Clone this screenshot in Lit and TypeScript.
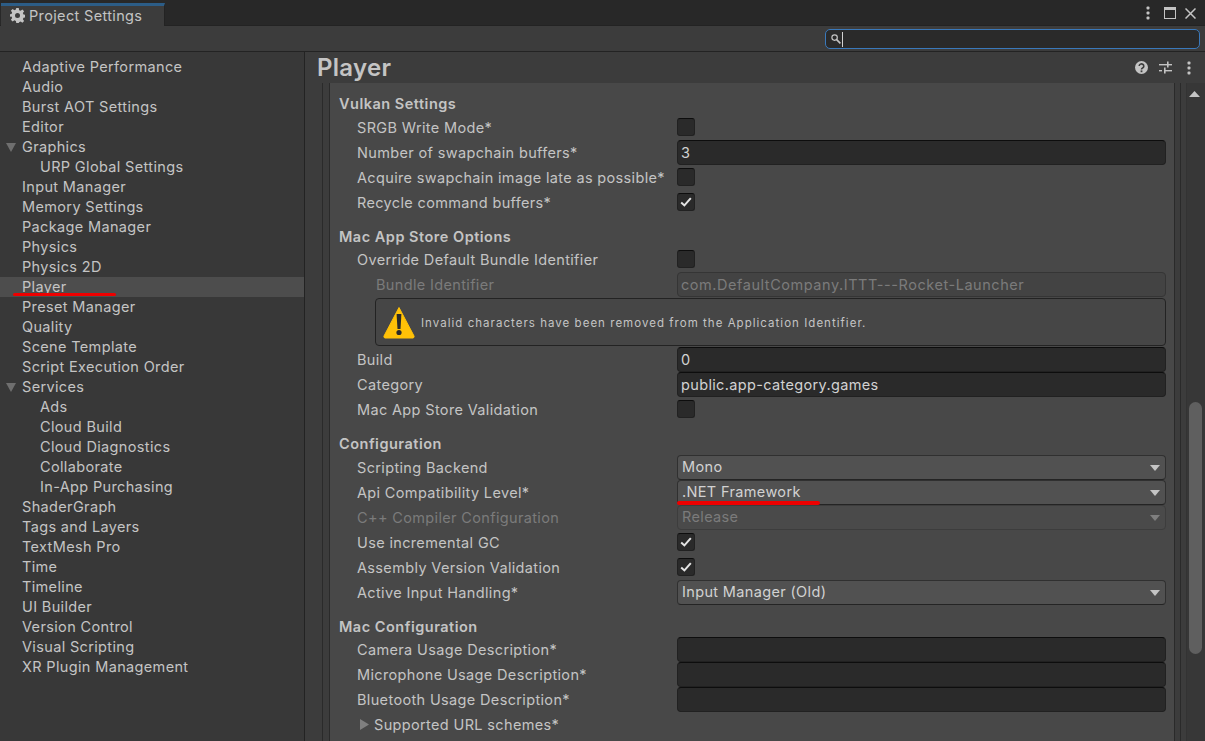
import { LitElement, css, html, nothing } from "lit";
import { customElement } from "lit/decorators.js";

type Row =
  | { kind: "head"; text: string; tall?: boolean }
  | { kind: "check"; label: string; checked?: boolean; dim?: boolean }
  | { kind: "text"; label: string; value?: string; sub?: boolean; dim?: boolean }
  | { kind: "drop"; label: string; value: string; dim?: boolean; mark?: boolean }
  | { kind: "help"; text: string }
  | { kind: "fold"; label: string };

const NAV: { t: string; lvl?: number; open?: boolean; sel?: boolean }[] = [
  { t: "Adaptive Performance" },
  { t: "Audio" },
  { t: "Burst AOT Settings" },
  { t: "Editor" },
  { t: "Graphics", open: true },
  { t: "URP Global Settings", lvl: 1 },
  { t: "Input Manager" },
  { t: "Memory Settings" },
  { t: "Package Manager" },
  { t: "Physics" },
  { t: "Physics 2D" },
  { t: "Player", sel: true },
  { t: "Preset Manager" },
  { t: "Quality" },
  { t: "Scene Template" },
  { t: "Script Execution Order" },
  { t: "Services", open: true },
  { t: "Ads", lvl: 1 },
  { t: "Cloud Build", lvl: 1 },
  { t: "Cloud Diagnostics", lvl: 1 },
  { t: "Collaborate", lvl: 1 },
  { t: "In-App Purchasing", lvl: 1 },
  { t: "ShaderGraph" },
  { t: "Tags and Layers" },
  { t: "TextMesh Pro" },
  { t: "Time" },
  { t: "Timeline" },
  { t: "UI Builder" },
  { t: "Version Control" },
  { t: "Visual Scripting" },
  { t: "XR Plugin Management" },
];

const ROWS: Row[] = [
  { kind: "head", text: "Vulkan Settings", tall: true },
  { kind: "check", label: "SRGB Write Mode*" },
  { kind: "text", label: "Number of swapchain buffers*", value: "3" },
  { kind: "check", label: "Acquire swapchain image late as possible*" },
  { kind: "check", label: "Recycle command buffers*", checked: true },
  { kind: "head", text: "Mac App Store Options" },
  { kind: "check", label: "Override Default Bundle Identifier" },
  { kind: "text", label: "Bundle Identifier", value: "com.DefaultCompany.ITTT---Rocket-Launcher", sub: true, dim: true },
  { kind: "help", text: "Invalid characters have been removed from the Application Identifier." },
  { kind: "text", label: "Build", value: "0" },
  { kind: "text", label: "Category", value: "public.app-category.games" },
  { kind: "check", label: "Mac App Store Validation" },
  { kind: "head", text: "Configuration", tall: true },
  { kind: "drop", label: "Scripting Backend", value: "Mono" },
  { kind: "drop", label: "Api Compatibility Level*", value: ".NET Framework", mark: true },
  { kind: "drop", label: "C++ Compiler Configuration", value: "Release", dim: true },
  { kind: "check", label: "Use incremental GC", checked: true },
  { kind: "check", label: "Assembly Version Validation", checked: true },
  { kind: "drop", label: "Active Input Handling*", value: "Input Manager (Old)" },
  { kind: "head", text: "Mac Configuration" },
  { kind: "text", label: "Camera Usage Description*" },
  { kind: "text", label: "Microphone Usage Description*" },
  { kind: "text", label: "Bluetooth Usage Description*" },
  { kind: "fold", label: "Supported URL schemes*" },
];

const kebab = html`<svg width="4" height="14" viewBox="0 0 4 14"><g fill="#c4c4c4"><rect x="0.5" y="0.5" width="3" height="3" rx="1"/><rect x="0.5" y="5.5" width="3" height="3" rx="1"/><rect x="0.5" y="10.5" width="3" height="3" rx="1"/></g></svg>`;

@customElement("app-root")
export class AppRoot extends LitElement {
  static styles = css`
    :host {
      display: flex;
      flex-direction: column;
      width: 1205px;
      height: 741px;
      overflow: hidden;
      background: #3c3c3c;
      color: #c4c4c4;
      font-family: Inter, "Liberation Sans", sans-serif;
      font-size: 14.5px;
      letter-spacing: 0.35px;
    }
    .tabbar {
      flex: 0 0 26px;
      box-sizing: border-box;
      background: #282828;
      border-bottom: 1px solid #232323;
      padding: 3px 0 0 1px;
      display: flex;
      align-items: stretch;
    }
    .tab {
      width: 164px;
      box-sizing: border-box;
      margin-bottom: -1px;
      background: #3c3c3c;
      border-top: 3px solid #2c5d87;
      border-right: 1px solid #232323;
      display: flex;
      align-items: center;
      gap: 4px;
      padding: 0 0 1px 9px;
    }
    .winbtns {
      margin-left: auto;
      display: flex;
      align-items: center;
      gap: 9px;
      padding: 0 9px 2px 0;
    }
    .winbtns svg:first-child {
      margin-right: 5px;
    }
    .toolbar {
      flex: 0 0 26px;
      box-sizing: border-box;
      border-bottom: 1px solid #232323;
      display: flex;
      justify-content: flex-end;
      padding: 3px 5px 0 0;
    }
    .search {
      width: 375px;
      height: 20px;
      box-sizing: border-box;
      background: #2a2a2a;
      border: 1px solid #3a79bb;
      border-radius: 5px;
      display: flex;
      align-items: center;
      padding-left: 5px;
      gap: 1px;
    }
    .caret {
      width: 1px;
      height: 15px;
      background: #d2d2d2;
    }
    .split {
      flex: 1;
      min-height: 0;
      display: flex;
    }
    .side {
      flex: 0 0 305px;
      box-sizing: border-box;
      background: #383838;
      border-right: 1px solid #232323;
      padding-top: 5px;
    }
    .nav {
      position: relative;
      height: 20px;
      line-height: 20px;
      padding-left: 22px;
      white-space: nowrap;
    }
    .nav.l1 {
      padding-left: 40px;
    }
    .nav.sel {
      background: #4d4d4d;
    }
    .tri {
      position: absolute;
      left: 6px;
      top: 6px;
    }
    .redline {
      position: absolute;
      background: #ee0000;
      border-radius: 2px;
    }
    .nav .redline {
      left: 13px;
      top: 16px;
      width: 103px;
      height: 3px;
    }
    .main {
      flex: 1;
      min-width: 0;
      display: flex;
      flex-direction: column;
    }
    .head {
      flex: 0 0 31px;
      display: flex;
      align-items: center;
      padding: 0 14px 0 12px;
    }
    .title {
      font-size: 24px;
      font-weight: 600;
      letter-spacing: 0.3px;
      flex: 1;
      line-height: 31px;
    }
    .headicons {
      display: flex;
      align-items: center;
      gap: 11px;
    }
    .headicons svg:last-child {
      margin-left: 4px;
    }
    .body {
      flex: 1;
      min-height: 0;
      display: flex;
    }
    .gutter {
      flex: 0 0 18px;
      box-sizing: border-box;
      border-right: 1px solid #2a2a2a;
    }
    .gutter2 {
      flex: 0 0 7px;
      box-sizing: border-box;
      border-right: 1px solid #2a2a2a;
    }
    .content {
      flex: 1;
      min-width: 0;
      box-sizing: border-box;
      background: #484848;
      border-right: 1px solid #2a2a2a;
      padding: 10px 8px 0 9px;
      overflow: hidden;
    }
    .strip {
      flex: 0 0 6px;
      box-sizing: border-box;
      border-right: 1px solid #2a2a2a;
    }
    .strip2 {
      flex: 0 0 6px;
      box-sizing: border-box;
      border-right: 1px solid #333;
    }
    .track {
      flex: 0 0 18px;
      background: #373737;
      padding: 8px 0 0 2px;
      box-sizing: border-box;
    }
    .thumb {
      width: 13px;
      height: 252px;
      margin-top: 305px;
      border-radius: 7px;
      background: #5f5f5f;
    }
    .up {
      display: block;
    }
    h3 {
      margin: 11px 0 0;
      height: 21px;
      line-height: 22px;
      font-size: 14.5px;
      font-weight: 600;
      letter-spacing: 0.5px;
    }
    h3:first-child {
      margin-top: 0;
    }
    h3.tall {
      height: 22px;
    }
    .row {
      height: 25px;
      display: flex;
      align-items: center;
      padding-left: 18px;
    }
    .row.sub {
      padding-left: 37px;
    }
    .lab {
      flex: 1;
      white-space: nowrap;
    }
    .dim {
      color: #7b7b7b;
    }
    .ctl {
      flex: 0 0 489px;
      box-sizing: border-box;
      position: relative;
    }
    .field {
      height: 23px;
      line-height: 23px;
      padding-left: 3px;
      background: #2a2a2a;
      border: 1px solid #212121;
      border-top-color: #0d0d0d;
      border-radius: 4px;
      color: #d2d2d2;
    }
    .field.ro {
      background: #434343;
      border-color: #353535;
      color: #7b7b7b;
      letter-spacing: 0.55px;
    }
    .drop {
      height: 23px;
      line-height: 21px;
      padding-left: 4px;
      background: #515151;
      border: 1px solid #303030;
      border-bottom-color: #242424;
      border-radius: 4px;
      color: #d2d2d2;
      display: flex;
      align-items: center;
      justify-content: space-between;
      padding-right: 5px;
    }
    .drop span {
      margin-top: -2px;
    }
    .drop.off {
      background: #4a4a4a;
      border-color: #3d3d3d;
      color: #7b7b7b;
    }
    .ctl .redline {
      left: 0;
      top: 21px;
      width: 143px;
      height: 4px;
    }
    .box {
      width: 18px;
      height: 18px;
      margin-top: -1px;
      box-sizing: border-box;
      background: #2a2a2a;
      border: 1px solid #212121;
      border-top-color: #0d0d0d;
      border-radius: 3px;
      display: flex;
      align-items: center;
      justify-content: center;
    }
    .help {
      height: 48px;
      box-sizing: border-box;
      margin: 1px 0 1px 36px;
      border: 1px solid #232323;
      border-radius: 4px;
      background: #464646;
      display: flex;
      align-items: center;
      gap: 6px;
      padding-left: 7px;
      font-size: 11.5px;
      letter-spacing: 1.03px;
    }
    .help span {
      margin-top: 1px;
    }
    .fold {
      gap: 5px;
      padding-left: 21px;
    }
  `;

  private renderRow(r: Row) {
    if (r.kind === "head") return html`<h3 class=${r.tall ? "tall" : ""}>${r.text}</h3>`;
    if (r.kind === "help")
      return html`<div class="help">
        <svg width="32" height="33" viewBox="0 0 32 33">
          <path d="M16 1.5L31 30a1.5 1.5 0 0 1-1 2H2a1.5 1.5 0 0 1-1-2z" fill="#ffc107" stroke="#ffc107" stroke-linejoin="round"/>
          <path d="M13.6 8h4.8l-.9 15h-3z" fill="#2a2a2a"/>
          <circle cx="16" cy="26.5" r="2.6" fill="#2a2a2a"/>
        </svg>
        <span>${r.text}</span>
      </div>`;
    if (r.kind === "fold")
      return html`<div class="row fold">
        <svg width="9" height="11" viewBox="0 0 9 11"><path d="M0 0l9 5.5L0 11z" fill="#7f7f7f"/></svg>
        <span class="lab">${r.label}</span>
      </div>`;
    const lab = html`<span class="lab ${r.dim ? "dim" : ""}">${r.label}</span>`;
    if (r.kind === "check")
      return html`<div class="row">
        ${lab}
        <div class="ctl">
          <div class="box">
            ${r.checked
              ? html`<svg width="12" height="10" viewBox="0 0 12 10"><path d="M1.2 5.4L4.4 8.4L10.8 1.2" fill="none" stroke="#e4e4e4" stroke-width="2"/></svg>`
              : nothing}
          </div>
        </div>
      </div>`;
    if (r.kind === "text")
      return html`<div class="row ${r.sub ? "sub" : ""}">
        ${lab}
        <div class="ctl"><div class="field ${r.dim ? "ro" : ""}">${r.value ?? ""}</div></div>
      </div>`;
    return html`<div class="row">
      ${lab}
      <div class="ctl">
        <div class="drop ${r.dim ? "off" : ""}">
          <span>${r.value}</span>
          <svg width="10" height="6" viewBox="0 0 10 6"><path d="M0 0h10L5 6z" fill="${r.dim ? "#7f7f7f" : "#c4c4c4"}"/></svg>
        </div>
        ${r.mark ? html`<div class="redline"></div>` : nothing}
      </div>
    </div>`;
  }

  render() {
    return html`
      <div class="tabbar">
        <div class="tab">
          <svg width="15" height="15" viewBox="0 0 24 24">
            <path fill="#c4c4c4" fill-rule="evenodd" d="M10 0h4l.6 3.4 2.4 1 2.8-2 2.8 2.8-2 2.8 1 2.4 3.4.6v4l-3.4.6-1 2.4 2 2.8-2.8 2.8-2.8-2-2.4 1L14 24h-4l-.6-3.4-2.4-1-2.8 2-2.8-2.8 2-2.8-1-2.4L-1 14v-4l3.4-.6 1-2.4-2-2.8 2.8-2.8 2.8 2 2.4-1zM12 8a4 4 0 1 0 0 8 4 4 0 0 0 0-8z"/>
          </svg>
          <span>Project Settings</span>
        </div>
        <div class="winbtns">
          ${kebab}
          <svg width="12" height="12" viewBox="0 0 12 12"><rect x="0.5" y="0.5" width="11" height="11" fill="none" stroke="#c4c4c4"/><rect x="0" y="0" width="12" height="3" fill="#c4c4c4"/></svg>
          <svg width="11" height="11" viewBox="0 0 11 11"><path d="M0.5 0.5L10.5 10.5M10.5 0.5L0.5 10.5" stroke="#c4c4c4" stroke-width="1.5"/></svg>
        </div>
      </div>
      <div class="toolbar">
        <div class="search">
          <svg width="10" height="10" viewBox="0 0 10 10"><circle cx="3.6" cy="3.6" r="2.7" fill="none" stroke="#c4c4c4" stroke-width="1.2"/><path d="M5.6 5.6L9.4 9.4" stroke="#c4c4c4" stroke-width="1.6"/></svg>
          <div class="caret"></div>
        </div>
      </div>
      <div class="split">
        <div class="side">
          ${NAV.map(
            (n) => html`<div class="nav ${n.lvl ? "l1" : ""} ${n.sel ? "sel" : ""}">
              ${n.open
                ? html`<svg class="tri" width="10" height="9" viewBox="0 0 10 9"><path d="M0 0h10L5 9z" fill="#6f6f6f"/></svg>`
                : nothing}
              ${n.t}
              ${n.sel ? html`<div class="redline"></div>` : nothing}
            </div>`
          )}
        </div>
        <div class="main">
          <div class="head">
            <div class="title">Player</div>
            <div class="headicons">
              <svg width="13" height="13" viewBox="0 0 13 13"><circle cx="6.5" cy="6.5" r="6.5" fill="#c4c4c4"/><path d="M4.2 5a2.3 2.2 0 1 1 3.4 2c-.8.4-1.1.7-1.1 1.5" fill="none" stroke="#3c3c3c" stroke-width="1.6"/><rect x="5.6" y="9.4" width="1.8" height="1.8" fill="#3c3c3c"/></svg>
              <svg width="13" height="13" viewBox="0 0 13 13"><g fill="#c4c4c4"><rect x="0" y="3" width="13" height="1.4"/><rect x="8" y="0.5" width="1.6" height="6"/><rect x="0" y="9" width="3" height="1.4"/><rect x="6" y="9" width="7" height="1.4"/><rect x="5" y="6.5" width="1.6" height="6"/></g></svg>
              ${kebab}
            </div>
          </div>
          <div class="body">
            <div class="gutter"></div>
            <div class="gutter2"></div>
            <div class="content">${ROWS.map((r) => this.renderRow(r))}</div>
            <div class="strip"></div>
            <div class="strip2"></div>
            <div class="track">
              <svg class="up" width="11" height="6" viewBox="0 0 11 6"><path d="M5.5 0L11 6H0z" fill="#c4c4c4"/></svg>
              <div class="thumb"></div>
            </div>
          </div>
        </div>
      </div>
    `;
  }
}
